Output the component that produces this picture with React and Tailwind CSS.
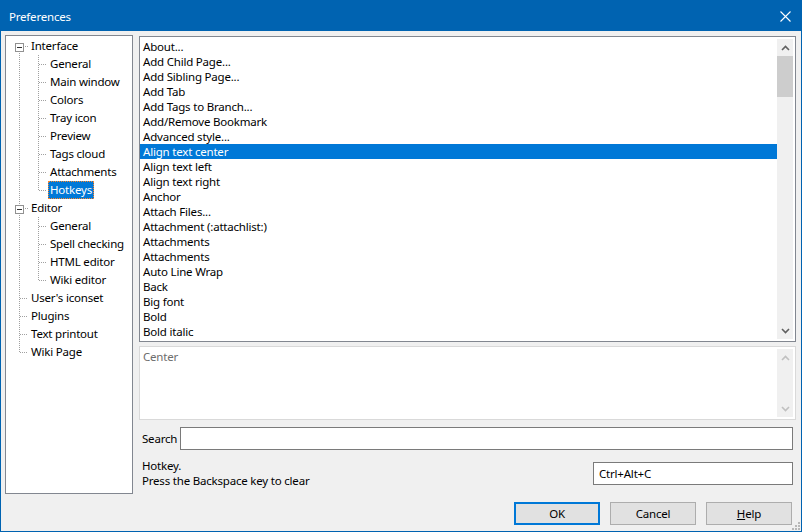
import * as React from "react";

const treeItems = [
  { label: "Interface", level: 0, open: true, first: true },
  { label: "General", level: 1 },
  { label: "Main window", level: 1 },
  { label: "Colors", level: 1 },
  { label: "Tray icon", level: 1 },
  { label: "Preview", level: 1 },
  { label: "Tags cloud", level: 1 },
  { label: "Attachments", level: 1 },
  { label: "Hotkeys", level: 1, last: true, selected: true },
  { label: "Editor", level: 0, open: true },
  { label: "General", level: 1 },
  { label: "Spell checking", level: 1 },
  { label: "HTML editor", level: 1 },
  { label: "Wiki editor", level: 1, last: true },
  { label: "User's iconset", level: 0 },
  { label: "Plugins", level: 0 },
  { label: "Text printout", level: 0 },
  { label: "Wiki Page", level: 0, last: true },
];

const commands = [
  "About...",
  "Add Child Page...",
  "Add Sibling Page...",
  "Add Tab",
  "Add Tags to Branch...",
  "Add/Remove Bookmark",
  "Advanced style...",
  "Align text center",
  "Align text left",
  "Align text right",
  "Anchor",
  "Attach Files...",
  "Attachment (:attachlist:)",
  "Attachments",
  "Attachments",
  "Auto Line Wrap",
  "Back",
  "Big font",
  "Bold",
  "Bold italic",
];

const dot = { stroke: "#a0a0a0", strokeWidth: 1, strokeDasharray: "1 1" };

// vertical line passing through (ancestor column)
function Pass({ on }) {
  return (
    <svg width="19" height="18" className="shrink-0" shapeRendering="crispEdges">
      {on && <line x1="13.5" y1="0" x2="13.5" y2="18" {...dot} />}
    </svg>
  );
}

// connector with elbow, optional expander box
function Connector({ top, bottom, box }) {
  return (
    <svg width="22" height="18" className="shrink-0" shapeRendering="crispEdges">
      {top && <line x1="13.5" y1="0" x2="13.5" y2={box ? 6 : 10} {...dot} />}
      {bottom && <line x1="13.5" y1={box ? 16 : 10} x2="13.5" y2="18" {...dot} />}
      <line x1={box ? 19 : 14} y1="9.5" x2="22" y2="9.5" {...dot} />
      {box && (
        <>
          <rect x="9.5" y="6.5" width="8" height="8" fill="#fff" stroke="#919191" />
          <line x1="11" y1="10.5" x2="16" y2="10.5" stroke="#333" />
        </>
      )}
    </svg>
  );
}

function Tree() {
  return (
    <div className="w-[128px] h-[459px] border border-[#828790] bg-white pt-[1px]">
      {treeItems.map((item, i) => (
        <div key={"tree-" + i} className="flex items-center h-[18px]">
          {item.level === 1 && <Pass on />}
          <Connector
            top={!(item.level === 0 && item.first)}
            bottom={!item.last}
            box={item.open}
          />
          <span
            className={
              "ml-[1px] px-[1px] pb-[1px] h-[18px] flex items-center whitespace-nowrap border border-dotted " +
              (item.selected
                ? "bg-[#0078d7] text-white border-[#ff8728]"
                : "border-transparent text-black")
            }
          >
            {item.label}
          </span>
        </div>
      ))}
    </div>
  );
}

function Chevron({ down, color }) {
  return (
    <svg width="9" height="6" viewBox="0 0 9 6">
      <polyline
        points={down ? "1,1 4.5,4.5 8,1" : "1,5 4.5,1.5 8,5"}
        fill="none"
        stroke={color}
        strokeWidth="1.6"
      />
    </svg>
  );
}

function ScrollBar({ disabled, thumb }) {
  const c = disabled ? "#c0c0c0" : "#606060";
  return (
    <div className="w-[16px] bg-[#f0f0f0] flex flex-col shrink-0">
      <div className="h-[17px] flex items-center justify-center shrink-0">
        <Chevron color={c} />
      </div>
      <div className="flex-1">
        {thumb && <div className="h-[41px] bg-[#cdcdcd]" />}
      </div>
      <div className="h-[17px] flex items-center justify-center shrink-0">
        <Chevron down color={c} />
      </div>
    </div>
  );
}

export default function App() {
  return (
    <div className="w-[802px] h-[532px] bg-[#0063b1] flex flex-col font-['Segoe_UI','Noto_Sans',sans-serif] text-[11.5px] tracking-[-0.2px] leading-[15px] text-black">
      <div className="h-[31px] flex items-center shrink-0 pl-[9px] pr-[11px] pt-[1px] text-white">
        <span className="flex-1">Preferences</span>
        <svg width="11" height="11" viewBox="0 0 11 11">
          <path d="M0.5 0.5 L10.5 10.5 M10.5 0.5 L0.5 10.5" stroke="#fff" strokeWidth="1.1" />
        </svg>
      </div>

      <div className="relative flex-1 mx-[1px] mb-[1px] bg-[#f0f0f0] flex flex-col">
        <div className="flex pt-[4px] pl-[4px]">
          <Tree />

          <div className="ml-[6px] w-[657px] flex flex-col">
            <div className="mt-[1px] h-[306px] border border-[#828790] bg-white flex">
              <div className="flex-1 overflow-hidden pt-[2px]">
                {commands.map((c, i) => (
                  <div
                    key={"cmd-" + i}
                    className={
                      "h-[15px] pl-[3px] whitespace-nowrap " +
                      (c === "Align text center" ? "bg-[#0078d7] text-white" : "")
                    }
                  >
                    {c}
                  </div>
                ))}
              </div>
              <div className="flex my-[2px] mr-[2px]">
                <ScrollBar thumb />
              </div>
            </div>

            <div className="mt-[4px] h-[74px] border border-[#d9d9d9] bg-white flex">
              <div className="flex-1 pl-[3px] pt-[2px] text-[#6d6d6d]">Center</div>
              <div className="flex my-[2px] mr-[2px]">
                <ScrollBar disabled />
              </div>
            </div>

            <div className="mt-[7px] flex items-center">
              <span className="pl-[3px] w-[41px]">Search</span>
              <div className="w-[613px] h-[23px] border border-[#7a7a7a] bg-white" />
            </div>

            <div className="mt-[8px] flex items-start">
              <div className="pl-[3px] flex-1">
                <div>Hotkey.</div>
                <div>Press the Backspace key to clear</div>
              </div>
              <div className="mt-[4px] mr-[3px] w-[200px] h-[23px] border border-[#7a7a7a] bg-white flex items-center pl-[5px]">
                Ctrl+Alt+C
              </div>
            </div>
          </div>
        </div>

        <div className="mt-[8px] flex justify-end gap-[10px] pr-[9px]">
          <button className="w-[86px] h-[23px] border-2 border-[#0078d7] bg-[#e1e1e1]">OK</button>
          <button className="w-[86px] h-[23px] border border-[#adadad] bg-[#e1e1e1]">Cancel</button>
          <button className="w-[86px] h-[23px] border border-[#adadad] bg-[#e1e1e1]">
            <span className="underline">H</span>elp
          </button>
        </div>

        <svg
          className="absolute right-[1px] bottom-[1px]"
          width="10"
          height="10"
          viewBox="0 0 10 10"
          shapeRendering="crispEdges"
        >
          {[
            [8, 0], [8, 3], [5, 3], [8, 6], [5, 6], [2, 6],
          ].map(([x, y], i) => (
            <rect key={"g" + i} x={x} y={y + 2} width="2" height="2" fill="#b8b8b8" />
          ))}
        </svg>
      </div>
    </div>
  );
}
